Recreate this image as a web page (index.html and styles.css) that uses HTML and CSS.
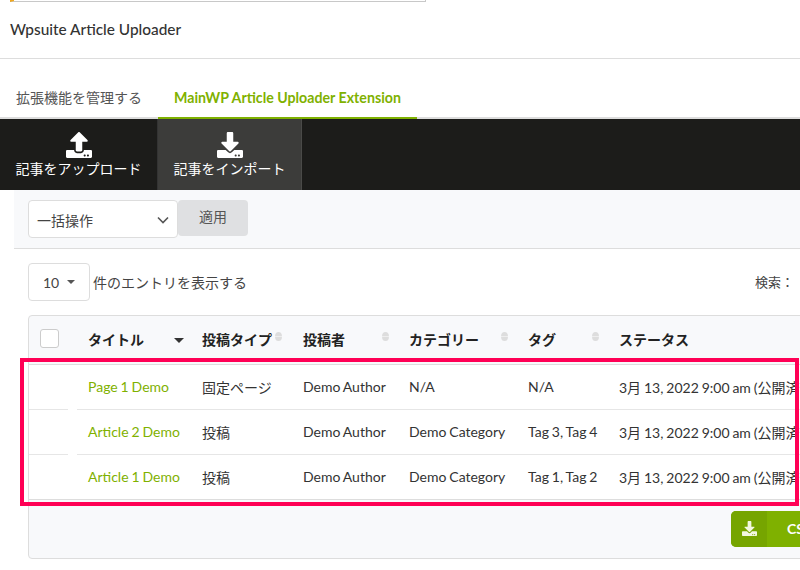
FILE: index.html
```html
<!DOCTYPE html>
<html lang="ja">
<head>
<meta charset="utf-8">
<title>Wpsuite Article Uploader</title>
<link rel="stylesheet" href="styles.css">
</head>
<body>
<div class="notice"></div>
<header class="page-title">Wpsuite Article Uploader</header>
<nav class="tabs">
  <a class="tab">拡張機能を管理する</a>
  <a class="tab tab-active">MainWP Article Uploader Extension</a>
</nav>
<div class="toolbar">
  <a class="tool tool-upload">
    <svg class="tool-icon" viewBox="0 0 512 512"><path d="M296 384h-80c-13.3 0-24-10.7-24-24V192h-87.7c-17.8 0-26.7-21.5-14.1-34.1L242.3 5.7c7.5-7.5 19.8-7.5 27.3 0l152.2 152.2c12.6 12.6 3.7 34.1-14.1 34.1H320v168c0 13.3-10.7 24-24 24zm216-8v112c0 13.3-10.7 24-24 24H24c-13.3 0-24-10.7-24-24V376c0-13.3 10.7-24 24-24h136v8c0 30.9 25.1 56 56 56h80c30.9 0 56-25.1 56-56v-8h136c13.3 0 24 10.7 24 24zm-124 88c0-11-9-20-20-20s-20 9-20 20 9 20 20 20 20-9 20-20zm64 0c0-11-9-20-20-20s-20 9-20 20 9 20 20 20 20-9 20-20z"/></svg>
    <span>記事をアップロード</span>
  </a>
  <a class="tool tool-active">
    <svg class="tool-icon" viewBox="0 0 512 512"><path d="M216 0h80c13.3 0 24 10.7 24 24v168h87.7c17.8 0 26.7 21.5 14.1 34.1L269.7 378.3c-7.5 7.5-19.8 7.5-27.3 0L90.1 226.1c-12.6-12.6-3.7-34.1 14.1-34.1H192V24c0-13.3 10.7-24 24-24zm296 376v112c0 13.3-10.7 24-24 24H24c-13.3 0-24-10.7-24-24V376c0-13.3 10.7-24 24-24h146.7l49 49c20.1 20.1 52.5 20.1 72.6 0l49-49H488c13.3 0 24 10.7 24 24zm-124 88c0-11-9-20-20-20s-20 9-20 20 9 20 20 20 20-9 20-20zm64 0c0-11-9-20-20-20s-20 9-20 20 9 20 20 20 20-9 20-20z"/></svg>
    <span>記事をインポート</span>
  </a>
</div>
<main class="content">
  <div class="bulk-bar">
    <div class="bulk-select">
      <span>一括操作</span>
      <svg class="chevron" viewBox="0 0 12 8"><path d="M1 1.5l5 5 5-5" fill="none" stroke="#555" stroke-width="1.6"/></svg>
    </div>
    <div class="apply">適用</div>
  </div>
  <div class="list-controls">
    <div class="length">
      <div class="length-select"><span>10</span><i class="caret"></i></div>
      <span class="length-label">件のエントリを表示する</span>
    </div>
    <div class="search-label">検索：</div>
  </div>
  <section class="card">
    <table class="posts">
      <colgroup>
        <col class="c-check"><col class="c-title"><col class="c-type"><col class="c-author"><col class="c-cat"><col class="c-tag"><col class="c-status">
      </colgroup>
      <thead>
        <tr>
          <th><span class="checkbox"></span></th>
          <th>タイトル<i class="sort-active"></i></th>
          <th class="th-type">投稿タイプ<i class="sort sort-type"></i></th>
          <th>投稿者<i class="sort"></i></th>
          <th>カテゴリー<i class="sort"></i></th>
          <th>タグ<i class="sort"></i></th>
          <th>ステータス</th>
        </tr>
      </thead>
      <tbody>
        <tr>
          <td></td><td><a class="link">Page 1 Demo</a></td><td>固定ページ</td><td>Demo Author</td><td>N/A</td><td>N/A</td><td>3月 13, 2022 9:00 am (公開済み)</td>
        </tr>
        <tr>
          <td></td><td><a class="link">Article 2 Demo</a></td><td>投稿</td><td>Demo Author</td><td>Demo Category</td><td>Tag 3, Tag 4</td><td>3月 13, 2022 9:00 am (公開済み)</td>
        </tr>
        <tr>
          <td></td><td><a class="link">Article 1 Demo</a></td><td>投稿</td><td>Demo Author</td><td>Demo Category</td><td>Tag 1, Tag 2</td><td>3月 13, 2022 9:00 am (公開済み)</td>
        </tr>
      </tbody>
    </table>
    <div class="card-footer">
      <a class="csv">
        <span class="csv-icon"><svg viewBox="0 0 512 512"><path d="M216 0h80c13.3 0 24 10.7 24 24v168h87.7c17.8 0 26.7 21.5 14.1 34.1L269.7 378.3c-7.5 7.5-19.8 7.5-27.3 0L90.1 226.1c-12.6-12.6-3.7-34.1 14.1-34.1H192V24c0-13.3 10.7-24 24-24zm296 376v112c0 13.3-10.7 24-24 24H24c-13.3 0-24-10.7-24-24V376c0-13.3 10.7-24 24-24h146.7l49 49c20.1 20.1 52.5 20.1 72.6 0l49-49H488c13.3 0 24 10.7 24 24zm-124 88c0-11-9-20-20-20s-20 9-20 20 9 20 20 20 20-9 20-20zm64 0c0-11-9-20-20-20s-20 9-20 20 9 20 20 20 20-9 20-20z"/></svg></span>
        <span class="csv-text">CSVインポート</span>
      </a>
    </div>
  </section>
</main>
<div class="highlight"></div>
</body>
</html>
```
FILE: styles.css
```css
* { box-sizing: border-box; }
html, body { height: 570px; overflow: hidden; }
body {
  margin: 0;
  position: relative;
  background: #fff;
  color: #333;
  font-family: Lato, "Noto Sans CJK JP", sans-serif;
  font-size: 14px;
}
.notice {
  width: 416px;
  height: 2px;
  margin-left: 10px;
  background: #fff;
  border-left: 4px solid #f0a820;
  border-right: 1px solid #c8c8c8;
  border-bottom: 1px solid #c8c8c8;
}
.page-title {
  height: 57px;
  padding: 17px 0 0 10px;
  border-bottom: 1px solid #ddd;
  font-size: 15.4px;
  line-height: 20px;
  font-weight: 500;
  color: #333;
}
.tabs {
  display: flex;
  height: 60px;
  padding-top: 20px;
  border-bottom: 2px solid #ddd;
}
.tab {
  width: 158px;
  height: 40px;
  padding: 0 16px;
  line-height: 38px;
  font-size: 14px;
  color: #555;
}
.tab-active {
  width: 259px;
  border-bottom: 2px solid #7fb100;
  color: #7fb100;
  font-weight: 700;
  font-size: 14.2px;
  white-space: nowrap;
}
.toolbar {
  display: flex;
  height: 71px;
  background: #1c1c1a;
}
.tool {
  display: flex;
  flex-direction: column;
  align-items: center;
  height: 71px;
  padding-top: 13px;
  color: #fff;
  font-size: 14px;
  line-height: 20px;
}
.tool-upload { width: 158px; border-right: 1px solid #333; }
.tool-active { width: 144px; background: #3c3c3a; border-right: 1px solid #4a4a48; }
.tool-icon { width: 26px; height: 26px; fill: #fff; margin-bottom: 1px; display: block; }
.content { padding-left: 14px; width: 850px; }
.bulk-bar {
  display: flex;
  align-items: flex-start;
  height: 59px;
  padding: 10px 0 0 14px;
  background: #f8f9fb;
  border-bottom: 1px solid #ddd;
}
.bulk-select {
  display: flex;
  align-items: center;
  justify-content: space-between;
  width: 150px;
  height: 38px;
  padding: 2px 8px 0 8px;
  background: #fff;
  border: 1px solid #ddd;
  border-radius: 4px;
  color: #444;
}
.chevron { width: 12px; height: 8px; }
.apply {
  width: 70px;
  height: 36px;
  line-height: 34px;
  text-align: center;
  background: #dfe0e2;
  border-radius: 4px;
  color: #555;
  font-size: 14px;
}
.list-controls {
  display: flex;
  justify-content: space-between;
  height: 66px;
  padding: 14px 0 0 14px;
}
.length { display: flex; align-items: center; height: 38px; gap: 3px; }
.length-select {
  display: flex;
  align-items: center;
  width: 62px;
  height: 38px;
  padding-left: 14px;
  gap: 8px;
  border: 1px solid #ddd;
  border-radius: 4px;
  color: #444;
}
.caret {
  width: 0;
  height: 0;
  border-left: 4px solid transparent;
  border-right: 4px solid transparent;
  border-top: 4px solid #555;
}
.length-label { color: #444; }
.search-label { width: 95px; line-height: 38px; color: #444; font-size: 13px; }
.card {
  margin-left: 14px;
  width: 822px;
  height: 244px;
  background: #f8f9fb;
  border: 1px solid #ddd;
  border-radius: 4px;
}
.posts {
  width: 821px;
  table-layout: fixed;
  border-collapse: collapse;
}
.c-check { width: 48px; }
.c-title { width: 125px; }
.c-type { width: 90px; }
.c-author { width: 106px; }
.c-cat { width: 119px; }
.c-tag { width: 91px; }
.posts th {
  position: relative;
  height: 48px;
  padding: 0 0 2px 11px;
  text-align: left;
  font-weight: 700;
  font-size: 14px;
  color: #222;
  white-space: nowrap;
  border-bottom: 1px solid #ddd;
}
.posts th.th-type { padding-left: 0; }
.posts td {
  height: 45px;
  padding: 0 0 0 11px;
  background: #fff;
  color: #333;
  border-top: 1px solid #e6e6e6;
  white-space: nowrap;
  overflow: hidden;
  word-spacing: -0.7px;
}
.posts td:nth-child(3) { padding-left: 0; }
.posts td:first-child {
  border-top: 0;
  background: #fff linear-gradient(#e6e6e6, #e6e6e6) no-repeat 0 0 / 39px 1px;
}
.posts tr:first-child td { border-top: 0; }
.posts tr:first-child td:first-child { background: #fff; }
.posts tr:last-child td { border-bottom: 1px solid #ddd; }
.link { color: #7fb100; }
.checkbox {
  display: block;
  width: 19px;
  height: 19px;
  background: #fff;
  border: 1px solid #ccc;
  border-radius: 3px;
}
.sort {
  position: absolute;
  right: 9px;
  top: 16px;
  width: 7px;
  height: 9px;
  border-radius: 50%;
  background: linear-gradient(#ddd 45%, #eee 45%, #eee 55%, #ddd 55%);
}
.sort-type { right: 10px; }
.sort-active {
  position: absolute;
  right: 18px;
  top: 22px;
  width: 0;
  height: 0;
  border-left: 5px solid transparent;
  border-right: 5px solid transparent;
  border-top: 5px solid #333;
}
.card-footer {
  display: flex;
  padding: 11px 0 0 702px;
}
.csv {
  display: flex;
  width: 120px;
  height: 36px;
  background: #7fb100;
  border-radius: 5px 0 0 5px;
  color: #fff;
  font-weight: 700;
  overflow: hidden;
}
.csv-icon {
  display: flex;
  flex: none;
  align-items: center;
  justify-content: center;
  width: 36px;
  background: #76a500;
}
.csv-icon svg { width: 15px; height: 15px; fill: #f2f7e0; }
.csv-text { padding-left: 20px; line-height: 36px; white-space: nowrap; }
.highlight {
  position: absolute;
  left: 20px;
  top: 358px;
  width: 779px;
  height: 148px;
  border: 4px solid #ff0055;
  pointer-events: none;
}
```
